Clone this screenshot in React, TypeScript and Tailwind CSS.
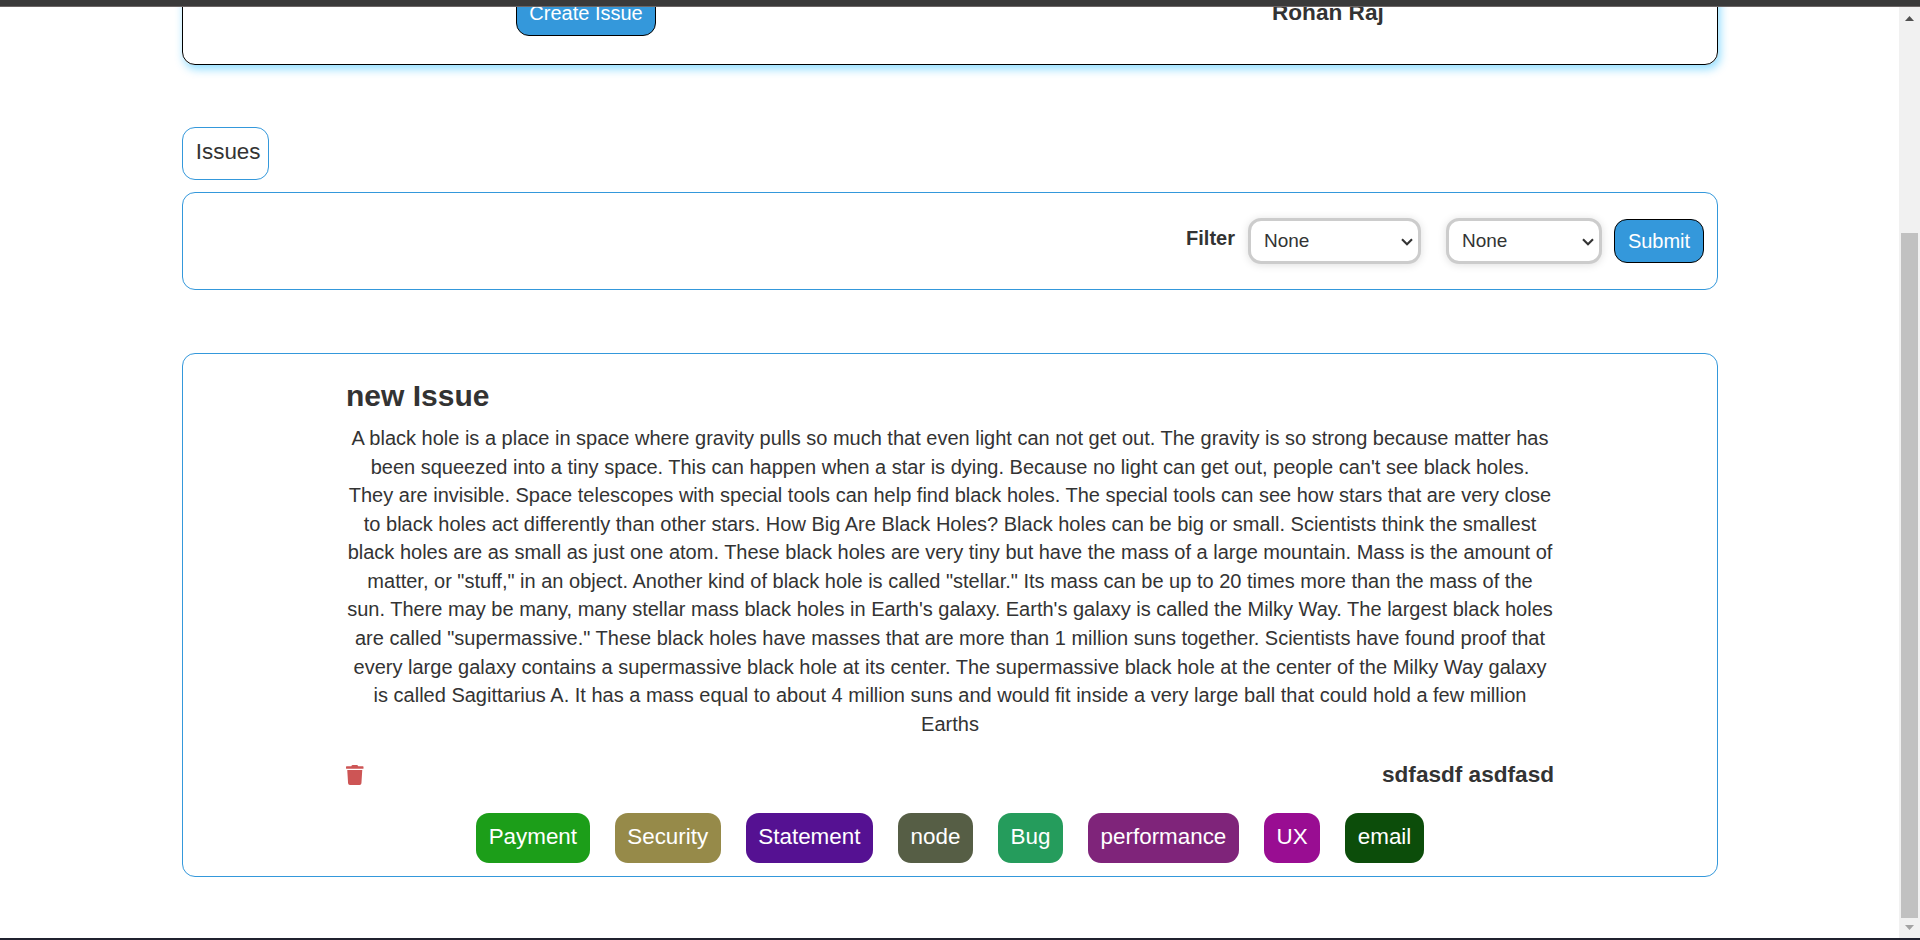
import React from "react";

const tags = [
  { name: "Payment", color: "bg-[#1c9e19]" },
  { name: "Security", color: "bg-[#968a49]" },
  { name: "Statement", color: "bg-[#551192]" },
  { name: "node", color: "bg-[#565e45]" },
  { name: "Bug", color: "bg-[#259c5c]" },
  { name: "performance", color: "bg-[#7f247a]" },
  { name: "UX", color: "bg-[#990d92]" },
  { name: "email", color: "bg-[#0c4d0a]" },
];

const description =
  "A black hole is a place in space where gravity pulls so much that even light can not get out. The gravity is so strong because matter has been squeezed into a tiny space. This can happen when a star is dying. Because no light can get out, people can't see black holes. They are invisible. Space telescopes with special tools can help find black holes. The special tools can see how stars that are very close to black holes act differently than other stars. How Big Are Black Holes? Black holes can be big or small. Scientists think the smallest black holes are as small as just one atom. These black holes are very tiny but have the mass of a large mountain. Mass is the amount of matter, or \"stuff,\" in an object. Another kind of black hole is called \"stellar.\" Its mass can be up to 20 times more than the mass of the sun. There may be many, many stellar mass black holes in Earth's galaxy. Earth's galaxy is called the Milky Way. The largest black holes are called \"supermassive.\" These black holes have masses that are more than 1 million suns together. Scientists have found proof that every large galaxy contains a supermassive black hole at its center. The supermassive black hole at the center of the Milky Way galaxy is called Sagittarius A. It has a mass equal to about 4 million suns and would fit inside a very large ball that could hold a few million Earths";

function Select({ className }: { className: string }) {
  return (
    <div
      className={`flex h-[46px] items-center justify-between rounded-[13px] border-[3px] border-[#ccc] bg-white pt-px pl-[13px] pr-[5px] text-[19px] shadow-[0_1px_8px_rgba(0,0,0,0.13)] ${className}`}
    >
      <span>None</span>
      <svg width="12" height="8" viewBox="0 0 12 8" fill="none">
        <path d="M1 1.3 6 6.3 11 1.3" stroke="#333" strokeWidth="2.1" />
      </svg>
    </div>
  );
}

function ProjectCard() {
  return (
    <section className="-mt-[60px] flex h-[118px] w-[1536px] shrink-0 items-end rounded-[13px] border border-black pb-[28px] shadow-[2px_4px_10px_rgba(0,178,255,0.45)]">
      <button className="ml-[333px] flex h-[44px] w-[140px] items-center justify-center rounded-[13px] border border-black bg-[#3498db] pb-[2px] text-[20px] text-white">
        Create Issue
      </button>
      <span className="ml-[616px] pb-[10px] text-[22.6px] leading-[26px] font-bold">Rohan Raj</span>
    </section>
  );
}

function FilterBar() {
  return (
    <section className="mt-[12px] flex h-[98px] w-[1536px] shrink-0 items-start justify-end rounded-[13px] border border-[#3498db] pt-[25px] pr-[13px]">
      <span className="mt-[8px] mr-[13px] text-[20px] leading-[24px] font-bold">Filter</span>
      <Select className="mr-[25px] w-[173px]" />
      <Select className="mr-[12px] w-[156px]" />
      <button className="mt-px flex h-[44px] w-[90px] items-center justify-center rounded-[13px] border border-black bg-[#3498db] text-[20px] text-white">
        Submit
      </button>
    </section>
  );
}

function IssueCard() {
  return (
    <section className="mt-[63px] flex h-[524px] w-[1536px] shrink-0 flex-col items-center rounded-[13px] border border-[#3498db]">
      <div className="flex w-[1208px] flex-col">
        <h2 className="mt-[24px] text-[30px] leading-[36px] font-bold">new Issue</h2>
        <p className="mt-[10px] text-center text-[20px] leading-[28.57px]">{description}</p>
        <div className="mt-[21px] flex h-[32px] items-center justify-between">
          <svg width="17.5" height="20" viewBox="0 0 448 512" fill="#cd5555">
            <path d="M432 32H312l-9.4-18.7A24 24 0 0 0 281.1 0H166.8a23.72 23.72 0 0 0-21.4 13.3L136 32H16A16 16 0 0 0 0 48v32a16 16 0 0 0 16 16h416a16 16 0 0 0 16-16V48a16 16 0 0 0-16-16zM53.2 467a48 48 0 0 0 47.9 45h245.8a48 48 0 0 0 47.9-45L416 128H32z" />
          </svg>
          <span className="text-[22.6px] leading-[32px] font-bold">sdfasdf asdfasd</span>
        </div>
      </div>
      <div className="mt-auto mb-[13px] flex gap-[25px]">
        {tags.map((t) => (
          <span
            key={t.name}
            className={`flex h-[50px] items-center rounded-[13px] px-[12.6px] pb-[2px] text-[22.4px] text-white ${t.color}`}
          >
            {t.name}
          </span>
        ))}
      </div>
    </section>
  );
}

function Scrollbar() {
  return (
    <div className="flex w-[21px] shrink-0 flex-col items-center bg-[#f1f1f1]">
      <svg width="9" height="5" viewBox="0 0 9 5" className="mt-[9px]">
        <path d="M0 5 4.5 0 9 5z" fill="#505050" />
      </svg>
      <div className="mt-[212px] h-[685px] w-[17px] bg-[#c1c1c1]" />
      <svg width="9" height="5" viewBox="0 0 9 5" className="mt-[7px]">
        <path d="M0 0H9L4.500 5z" fill="#a3a3a3" />
      </svg>
    </div>
  );
}

export default function App() {
  return (
    <div className="flex h-[940px] w-[1920px] flex-col overflow-hidden bg-white font-['Liberation_Sans',Arial,sans-serif] text-[#333]">
      <div className="h-[7px] shrink-0 border-b border-[#6b6565] bg-[#3a3a3a]" />
      <div className="flex min-h-0 flex-1">
        <main className="flex flex-1 flex-col overflow-hidden pl-[182px]">
          <ProjectCard />
          <div className="mt-[62px] h-[53px] w-[87px] shrink-0 rounded-[13px] border border-[#3498db] pt-[11px] pl-[12.8px] text-[22.4px] leading-[26px]">
            Issues
          </div>
          <FilterBar />
          <IssueCard />
        </main>
        <Scrollbar />
      </div>
      <div className="h-[2px] shrink-0 bg-[#20222f]" />
    </div>
  );
}
